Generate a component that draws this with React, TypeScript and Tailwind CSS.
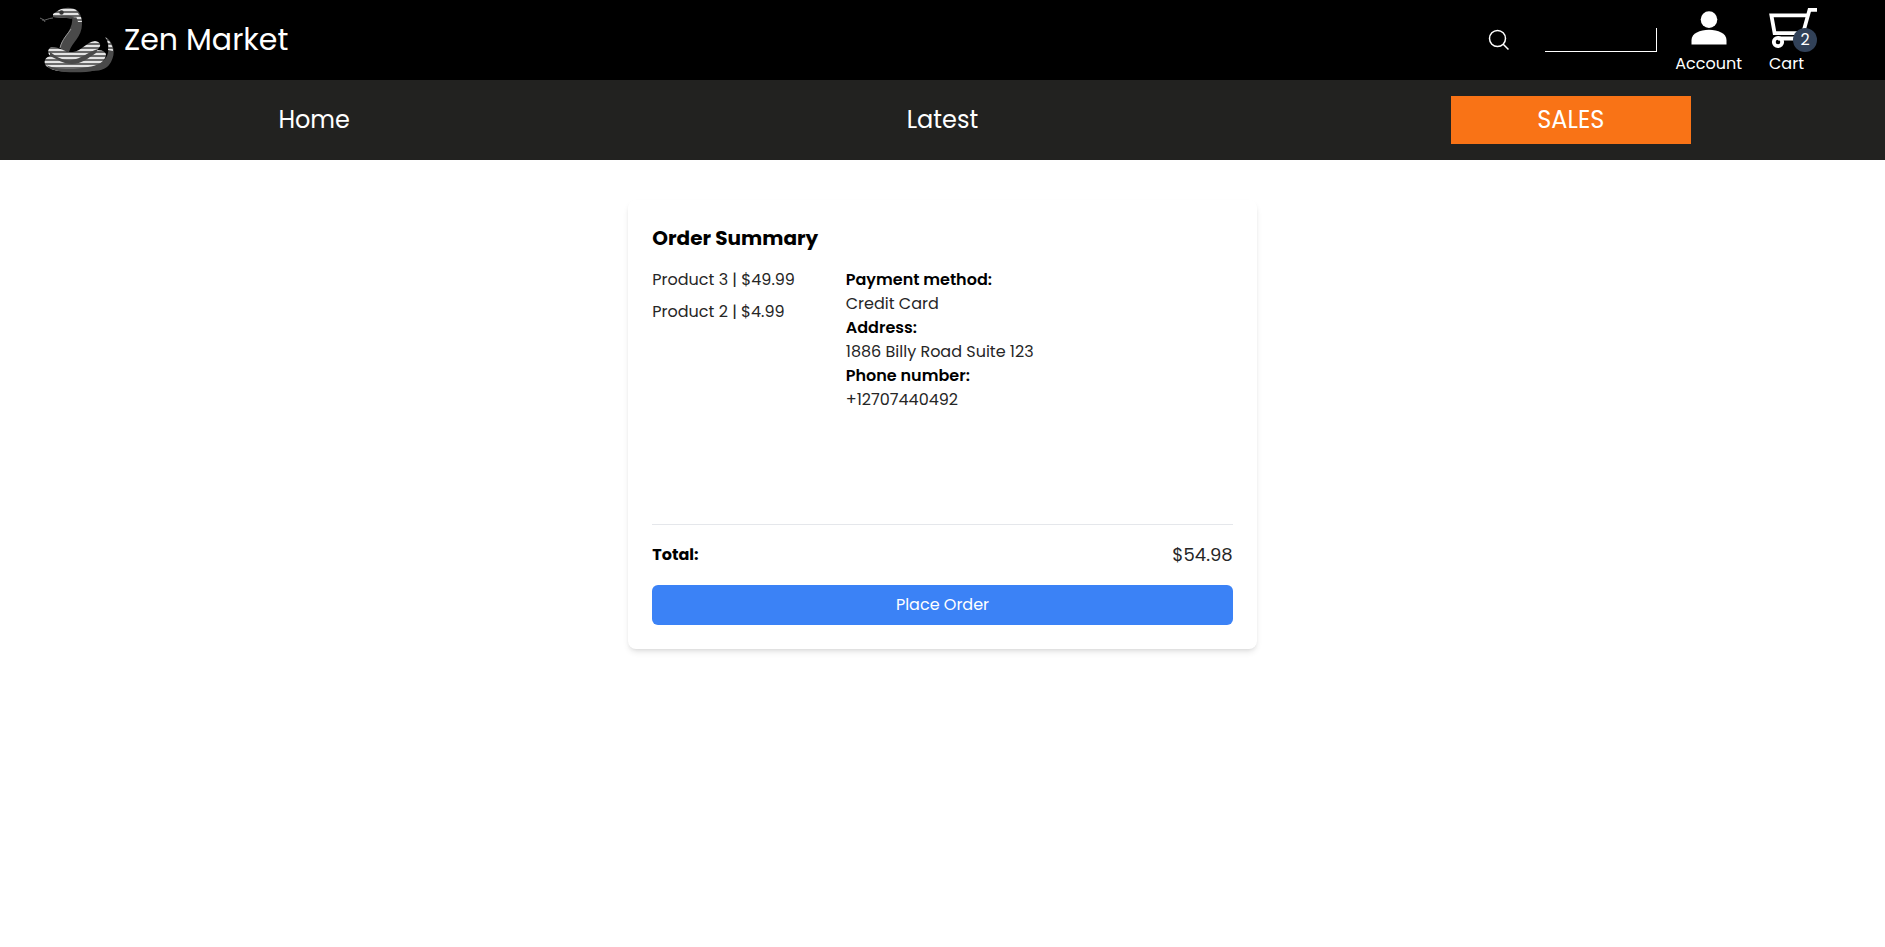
import React from "react";

const details = [
  { label: "Payment method:", value: "Credit Card" },
  { label: "Address:", value: "1886 Billy Road Suite 123" },
  { label: "Phone number:", value: "+12707440492" },
];

const products = [
  { name: "Product 3", price: "$49.99" },
  { name: "Product 2", price: "$4.99" },
];

function SnakeLogo() {
  return (
    <svg viewBox="2 0 88 80" className="h-20 w-22" aria-hidden="true">
      <defs>
        <pattern id="scales" width="88" height="4" patternUnits="userSpaceOnUse">
          <rect width="88" height="4" fill="#6a6a6a" />
          <rect y="1" width="88" height="2" fill="#e4e4e4" />
        </pattern>
      </defs>
      <path d="M23 18C18 18 16 21 12 20M14 20L10 18M14 20L15 22" fill="none" stroke="#666" strokeWidth="1" />
      <path d="M76 37C84 43 86 53 81 62C78 68 72 71 62 71H52L68 63C80 60 80 48 76 37Z" fill="#4a4a4a" />
      <path d="M75 37C80 41 83 46 83 51L78 50C79 45 78 41 75 37Z" fill="url(#scales)" />
      <path d="M42 16C44 28 35 35 30 46L31 50L39 52C42 42 52 37 52 24C52 17 50 11 45 9Z" fill="#4a4a4a" />
      <path d="M46 16L51 17L52 22L48 22Z" fill="url(#scales)" />
      <path d="M41 29C38 34 32 39 30 48" fill="none" stroke="#999" strokeWidth="1" />
      <path d="M23 14L29 10C35 7 43 7 47 11L50 17C42 18 32 18 23 17Z" fill="url(#scales)" />
      <path d="M23 16C31 17 36 14 45 17L41 19C35 17 29 18 23 17Z" fill="#4a4a4a" />
      <circle cx="31.5" cy="12.5" r="2.2" fill="#333" />
      <path d="M21 47C29 46 35 53 43 52C52 51 56 42 65 41C71 42 72 46 67 50C74 50 78 53 75 58C72 64 66 67 62 70C48 73 28 73 19 68C13 65 13 58 20 56C17 52 18 49 21 47Z" fill="url(#scales)" />
      <path d="M20 52C28 58 34 61 42 60C51 59 58 52 68 49L66 53C58 58 52 64 42 64C33 64 27 59 20 56Z" fill="#4a4a4a" />
      <path d="M16 65C26 70 45 70 58 67C67 66 73 62 76 58C76 65 68 71 56 72C38 73 22 72 16 65Z" fill="#4a4a4a" />
    </svg>
  );
}

function SearchIcon() {
  return (
    <svg viewBox="0 0 24 24" className="size-6" fill="none" stroke="white" strokeWidth="1.5" aria-hidden="true">
      <circle cx="10.5" cy="10.5" r="8" />
      <path d="M16.2 16.2L21.5 21.5" />
    </svg>
  );
}

function AccountIcon() {
  return (
    <svg viewBox="0 0 48 48" className="size-12" fill="white" aria-hidden="true">
      <circle cx="24" cy="15.6" r="8.3" />
      <path d="M6.5 40.5V36C6.5 29.5 15 25.8 24 25.8S41.5 29.5 41.5 36V40.5Z" />
    </svg>
  );
}

function CartIcon() {
  return (
    <svg viewBox="0 0 48 48" className="size-12" fill="none" stroke="white" strokeWidth="3.8" aria-hidden="true">
      <path d="M48 5.8H40.5L34 29.2H5.6L2.4 11.4H38M34 29.2L32 34.5H9" />
      <circle cx="9" cy="38" r="4.2" />
      <circle cx="31" cy="38" r="4.2" />
    </svg>
  );
}

export default function App() {
  return (
    <div className="min-h-screen bg-white font-['Poppins','Inter',sans-serif] text-base text-black">
      <header className="flex h-20 items-center justify-between bg-black pr-17 pl-8 text-white">
        <a href="#" className="flex items-center gap-1 text-3xl">
          <SnakeLogo />
          <span>Zen Market</span>
        </a>
        <div className="flex items-center">
          <button type="button" aria-label="Search" className="mr-[34px]">
            <SearchIcon />
          </button>
          <input
            type="search"
            aria-label="Search products"
            className="mr-[18px] h-6 w-28 appearance-none border-r border-b border-white bg-transparent px-1 text-sm outline-none"
          />
          <a href="#account" className="mr-[27px] flex flex-col items-center">
            <AccountIcon />
            <span>Account</span>
          </a>
          <a href="#cart" className="relative flex flex-col items-start">
            <CartIcon />
            <span>Cart</span>
            <span className="absolute top-6 right-0 flex size-6 items-center justify-center rounded-full bg-slate-700">
              2
            </span>
          </a>
        </div>
      </header>

      <nav className="grid h-20 grid-cols-3 place-items-center bg-[#222220] text-2xl text-white">
        <a href="#home">Home</a>
        <a href="#latest">Latest</a>
        <a href="#sales" className="flex h-12 w-60 items-center justify-center bg-[#f97316]">
          SALES
        </a>
      </nav>

      <main className="mx-auto mt-10 w-1/3 rounded-lg bg-white p-6 shadow-md">
        <h1 className="mb-4 text-xl font-bold">Order Summary</h1>
        <div className="grid h-64 grid-cols-3">
          <ul className="flex flex-col gap-2 text-neutral-800">
            {products.map((p) => (
              <li key={p.name}>
                {p.name} | {p.price}
              </li>
            ))}
          </ul>
          <dl className="col-span-2">
            {details.map((d) => (
              <React.Fragment key={d.label}>
                <dt className="font-semibold">{d.label}</dt>
                <dd className="text-neutral-800">{d.value}</dd>
              </React.Fragment>
            ))}
          </dl>
        </div>
        <hr className="mb-4 border-gray-200" />
        <div className="mb-4 flex items-center justify-between">
          <span className="font-bold">Total:</span>
          <span className="text-lg text-neutral-800">$54.98</span>
        </div>
        <button type="button" className="h-10 w-full rounded-md bg-[#3b82f6] text-white">
          Place Order
        </button>
      </main>
    </div>
  );
}
